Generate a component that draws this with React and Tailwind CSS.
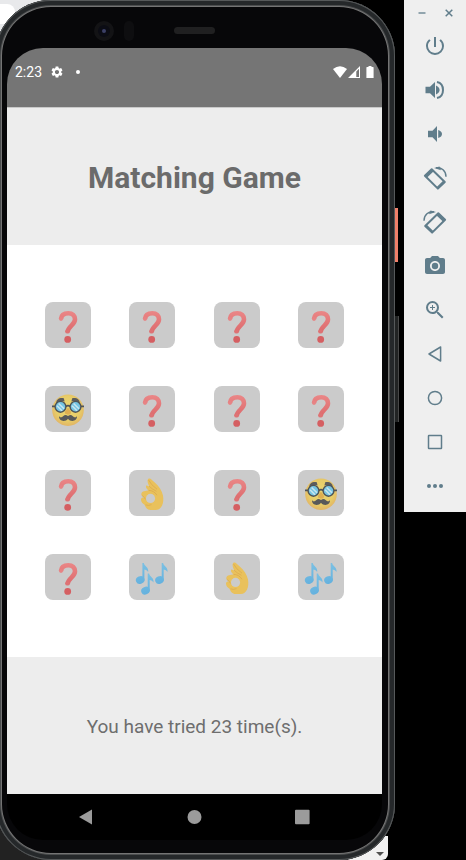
import { MdSettings, MdPowerSettingsNew, MdCameraAlt, MdZoomIn } from "react-icons/md";

function Question() {
  return (
    <svg viewBox="0 0 46 46" className="size-full" aria-hidden="true">
      <defs>
        <linearGradient id="red" x1="0" y1="8" x2="0" y2="41" gradientUnits="userSpaceOnUse">
          <stop offset="0" stopColor="#eb8888" />
          <stop offset="1" stopColor="#d55c60" />
        </linearGradient>
      </defs>
      <path d="M16 17C16.3 12.8 19.5 11.2 23.3 11.2C27.6 11.2 30 13.7 30 17.3C30 23.2 22.8 24 22.5 30.4" fill="none" stroke="url(#red)" strokeWidth="4.6" />
      <circle cx="16" cy="16.8" r="2.1" fill="#e78384" />
      <circle cx="22.5" cy="29.4" r="2.2" fill="#de7274" />
      <circle cx="22.7" cy="37.4" r="3.4" fill="#d55f62" />
    </svg>
  );
}

function Disguise() {
  return (
    <svg viewBox="0 0 46 46" className="size-full" aria-hidden="true">
      <defs>
        <radialGradient id="face" cx=".5" cy=".45" r=".55">
          <stop offset="0" stopColor="#ecd773" />
          <stop offset=".7" stopColor="#e7cc68" />
          <stop offset="1" stopColor="#e2b565" />
        </radialGradient>
      </defs>
      <circle cx="23" cy="24.2" r="15.8" fill="url(#face)" />
      <path d="M11.3 17.5C11 13.5 14 11.6 18.8 12.2L19.6 15.4C16.5 14.7 14.5 15.6 11.3 17.5ZM34.7 17.5C35 13.5 32 11.6 27.2 12.2L26.4 15.4C29.5 14.7 31.5 15.6 34.7 17.5Z" fill="#5c5c5d" />
      <path d="M23 21.5C21.8 23.7 19.2 25.3 20.2 27.6C21.1 29.2 24.9 29.2 25.8 27.6C26.8 25.3 24.2 23.7 23 21.5Z" fill="#deaf52" />
      <path d="M7 20.4H10.2M20.8 20.6Q23 18.8 25.2 20.6M35.8 20.4H39" stroke="#505457" strokeWidth="1.7" fill="none" />
      <circle cx="15.5" cy="20.8" r="5.4" fill="#75c4e3" stroke="#505457" strokeWidth="1.4" />
      <circle cx="30.5" cy="20.8" r="5.4" fill="#75c4e3" stroke="#505457" strokeWidth="1.4" />
      <path d="M12 19.8L17 24.8M13.6 17.5L19 22.8M27 19.8L32 24.8M28.6 17.5L34 22.8" stroke="#c8e5ef" strokeWidth="1.6" />
      <path d="M23 30C19.5 27.6 18.5 30.4 16.5 31.3C15.6 31.6 14.8 31.1 14 30.3C13.8 35.5 20.5 36.3 23 32.7C25.5 36.3 32.2 35.5 32 30.3C31.2 31.1 30.4 31.6 29.5 31.3C27.5 30.4 26.5 27.6 23 30Z" fill="#58595a" />
    </svg>
  );
}

function OkHand() {
  return (
    <svg viewBox="0 0 46 46" className="size-full" aria-hidden="true">
      <path
        d="M19.2 9C21 7.5 23 10 25.5 12.3C30 16.4 33 20.6 34 25.5C35.3 32.5 32.8 40 26.8 40H21.5C18.3 40 16.8 37.5 15.5 34.7C13.8 33.8 11.8 32 12 29.3C12.3 27.2 14.6 27.3 16 28C14 26.6 11.9 26 12.4 23.6C13 21.4 16.5 20.7 19.8 20.6C17.8 19.2 16.4 17.2 17.1 15.8C17.8 14.8 19.3 16.2 20.3 16.5C19.2 14 17.7 10.5 19.2 9Z"
        fill="#e9c15c"
      />
      <circle cx="21.5" cy="28.4" r="4.6" fill="#cbcbcb" />
      <path d="M20 16.2Q23 19 27.4 21.3M19.5 20.4Q25 20.4 28 25.3M19.6 10Q22 15 28 19.2M12.8 25.4Q15.4 26.8 16.5 29.4M16.5 34.8Q19 36 22.5 34.7" fill="none" stroke="#d9a64f" strokeWidth=".7" />
    </svg>
  );
}

function Notes() {
  return (
    <svg viewBox="0 0 46 46" className="size-full" aria-hidden="true">
      <defs>
        <linearGradient id="blue" x1="0" y1="8" x2="0" y2="41" gradientUnits="userSpaceOnUse">
          <stop offset="0" stopColor="#7cc1e3" />
          <stop offset="1" stopColor="#58a9dc" />
        </linearGradient>
        <g id="note">
          <ellipse cx="11.2" cy="26" rx="4.4" ry="3.8" transform="rotate(-24 11.2 26)" />
          <path d="M13.4 9H14.8C15.5 12.6 19.9 12.8 19.2 18C17.8 15.5 16.2 15.6 15.4 15.4V26.5H13.4Z" />
        </g>
      </defs>
      <g fill="url(#blue)">
        <use href="#note" />
        <use href="#note" x="19.3" />
        <use href="#note" x="5.3" y="10.6" />
      </g>
    </svg>
  );
}

const faces = {
  question: { label: "Hidden card", Icon: Question },
  disguise: { label: "Disguised face", Icon: Disguise },
  ok: { label: "OK hand", Icon: OkHand },
  notes: { label: "Musical notes", Icon: Notes },
};

const cards = [
  "question", "question", "question", "question",
  "disguise", "question", "question", "question",
  "question", "ok", "question", "disguise",
  "question", "notes", "ok", "notes",
];

function Speaker({ loud }) {
  return (
    <svg viewBox="0 0 24 24" className="size-6" fill="currentColor" aria-hidden="true">
      {loud ? (
        <>
          <path d="M2.5 8.7H7L12 4V20L7 15.3H2.5ZM13 7.5Q16.6 9.2 16.6 12T13 16.5Z" />
          <path d="M14 4C17.8 4.8 20 8 20 12S17.8 19.2 14 20" fill="none" stroke="currentColor" strokeWidth="2" />
        </>
      ) : (
        <path d="M5 8.7H9.5L14 4V20L9.5 15.3H5ZM15.2 7.9Q19 9.2 19 12T15.2 16.1Z" />
      )}
    </svg>
  );
}

function RotateLeft() {
  return (
    <svg viewBox="0 0 24 24" className="size-6" fill="none" stroke="currentColor" aria-hidden="true">
      <path d="M8.7 3.2L21.8 16L14.9 22.6L1.9 9.8Z" strokeWidth="2" strokeLinejoin="round" />
      <path d="M1.9 9.8L8.7 3.2L10.7 5.2L3.9 11.8ZM21.8 16L14.9 22.6L13.5 21.2L20.4 14.6Z" fill="currentColor" stroke="none" />
      <path d="M13 1.8C18.5 1 23 5 23 10.8" strokeWidth="1.4" />
      <path d="M11 2L16.5 .4L18 4.2Z" fill="currentColor" stroke="none" />
    </svg>
  );
}

function RotateRight() {
  return (
    <svg viewBox="0 0 24 24" className="size-6" fill="none" stroke="currentColor" aria-hidden="true">
      <path d="M15.3 3.2L2.2 16L9.1 22.6L22.1 9.8Z" strokeWidth="2" strokeLinejoin="round" />
      <path d="M22.1 9.8L15.3 3.2L13.3 5.2L20.1 11.8ZM2.2 16L9.1 22.6L10.5 21.2L3.6 14.6Z" fill="currentColor" stroke="none" />
      <path d="M11 1.8C5.5 1 1 5 1 10.8" strokeWidth="1.4" />
      <path d="M13 2L7.5 .4L6 4.2Z" fill="currentColor" stroke="none" />
    </svg>
  );
}

function Outline({ children }) {
  return (
    <svg viewBox="0 0 24 24" className="size-6" fill="none" stroke="currentColor" strokeWidth="1.5" strokeLinejoin="round" aria-hidden="true">
      {children}
    </svg>
  );
}

const tools = [
  { label: "Power", icon: <MdPowerSettingsNew className="size-6" /> },
  { label: "Volume up", icon: <Speaker loud /> },
  { label: "Volume down", icon: <Speaker /> },
  { label: "Rotate left", icon: <RotateLeft /> },
  { label: "Rotate right", icon: <RotateRight /> },
  { label: "Take screenshot", icon: <MdCameraAlt className="size-6" /> },
  { label: "Zoom", icon: <MdZoomIn className="size-6" /> },
  { label: "Back", icon: <Outline><path d="M6 12L17.6 5V19Z" /></Outline> },
  { label: "Home", icon: <Outline><circle cx="12" cy="12" r="6.6" /></Outline> },
  { label: "Overview", icon: <Outline><rect x="5.5" y="5.5" width="13" height="13" rx=".5" /></Outline> },
  {
    label: "More",
    icon: (
      <svg viewBox="0 0 24 24" className="size-6" fill="currentColor" aria-hidden="true">
        <circle cx="6" cy="12" r="2" /><circle cx="12" cy="12" r="2" /><circle cx="18" cy="12" r="2" />
      </svg>
    ),
  },
];

function StatusBar() {
  return (
    <header className="flex h-[59px] items-start justify-between bg-[#757575] px-2 pt-4 text-white">
      <div className="flex h-4 items-center">
        <span className="text-sm leading-4">2:23</span>
        <MdSettings className="ml-2 size-3.5" aria-hidden="true" />
        <span className="ml-3 size-1 rounded-full bg-white" />
      </div>
      <div className="flex h-4 items-center">
        <svg viewBox="0 0 14 12" className="h-3 w-3.5" fill="currentColor" aria-hidden="true">
          <path d="M0 3Q7-2.4 14 3L7 12Z" />
        </svg>
        <svg viewBox="0 0 12 12" className="ml-px size-3" fill="currentColor" aria-hidden="true">
          <path d="M0 12L12 0V12ZM8.3 5.5V11H11V2.8Z" fillRule="evenodd" />
        </svg>
        <svg viewBox="0 0 8 12" className="ml-1.5 h-3 w-2" fill="currentColor" aria-hidden="true">
          <path d="M2.5 0H5.5V1H7Q7.6 1 7.6 1.6V12H.4V1.6Q.4 1 1 1H2.5Z" />
        </svg>
      </div>
    </header>
  );
}

function Phone() {
  return (
    <div className="relative -ml-[5px] min-w-0 flex-1">
      <div className="absolute top-0 left-0 h-10 w-16 bg-[#e8e9eb]" />
      <div className="absolute top-1 left-0 h-5 w-5 rounded-tr-lg bg-white" />
      <div className="absolute bottom-0 left-0 h-14 w-16 bg-[#222222]" />
      <div className="absolute right-[7px] bottom-0 flex h-6 w-10 items-end justify-end rounded-br-md bg-[#f1f1f1] pr-1 pb-1">
        <svg viewBox="0 0 8 4" className="h-1 w-2" aria-hidden="true"><path d="M0 0H8L4 4Z" fill="#505050" /></svg>
      </div>
      <div className="absolute top-[208px] -right-[3px] h-[54px] w-[3px] bg-[#f0806a]" />
      <div className="absolute top-[316px] -right-1 h-[106px] w-1 border-r border-[#484848] bg-[#222424]" />

      <div className="relative rounded-t-[56px] rounded-b-[56px] bg-[#070709] pt-12 pr-[13px] pb-5 pl-3 shadow-[inset_0_0_0_1px_#56595a,inset_0_0_0_5px_#25282a,inset_0_0_0_6px_#4c4e4f,inset_0_0_0_7px_#747474]">
        <div className="absolute top-[21px] left-[99px] flex size-5 items-center justify-center rounded-full bg-[#131315]">
          <span className="flex size-3 items-center justify-center rounded-full bg-[#0b0c14]">
            <span className="size-1 rounded-full bg-[#3c4066]" />
          </span>
        </div>
        <div className="absolute top-[21px] left-[129px] h-5 w-2.5 rounded-full bg-[#0e0e10]" />
        <div className="absolute top-[27px] left-[179px] h-[7px] w-[41px] rounded-full bg-[#202021]" />

        <main className="overflow-hidden rounded-[36px]">
          <StatusBar />
          <section className="flex h-[138px] items-center justify-center border-t border-[#c9c9c9] bg-[#ededed]">
            <h1 className="pt-0.5 text-[30px] leading-9 font-bold text-[#6b6b6b]">Matching Game</h1>
          </section>
          <section className="grid grid-cols-4 bg-white px-[19px] py-[38px]">
            {cards.map((name, i) => {
              const { label, Icon } = faces[name];
              return (
                <div key={i} className="flex h-[84px] items-center justify-center">
                  <button type="button" aria-label={label} className="size-[46px] rounded-lg bg-[#cbcbcb]">
                    <Icon />
                  </button>
                </div>
              );
            })}
          </section>
          <section className="flex h-[137px] items-center justify-center bg-[#ededed]">
            <p className="pt-0.5 text-[19px] leading-6 text-[#6e6e6e]">You have tried 23 time(s).</p>
          </section>
          <nav className="flex h-[46px] items-center justify-center gap-[84px] bg-black text-[#9b9b9b]">
            <button type="button" aria-label="Back" className="size-6">
              <svg viewBox="0 0 24 24" className="size-6" fill="currentColor"><path d="M4 12L17 4.5V19.5Z" /></svg>
            </button>
            <button type="button" aria-label="Home" className="size-6">
              <svg viewBox="0 0 24 24" className="size-6" fill="currentColor"><circle cx="11.5" cy="12" r="7" /></svg>
            </button>
            <button type="button" aria-label="Recent apps" className="size-6">
              <svg viewBox="0 0 24 24" className="size-6" fill="currentColor"><rect x="4" y="4.7" width="14.6" height="14.6" rx="1" /></svg>
            </button>
          </nav>
        </main>
      </div>
    </div>
  );
}

function Toolbar() {
  return (
    <aside className="flex w-[62px] shrink-0 flex-col bg-[#efefef] pb-1 text-[#607d8b]">
      <div className="flex h-6 items-center justify-center gap-[15px] pt-0.5">
        <button type="button" aria-label="Minimize" className="size-3">
          <svg viewBox="0 0 12 12" className="size-3" stroke="currentColor" strokeWidth="1.3"><path d="M2.5 6H9.5" /></svg>
        </button>
        <button type="button" aria-label="Close" className="size-3">
          <svg viewBox="0 0 12 12" className="size-3" stroke="currentColor" strokeWidth="1.5"><path d="M2.7 2.7L9.3 9.3M9.3 2.7L2.7 9.3" /></svg>
        </button>
      </div>
      {tools.map((tool) => (
        <button key={tool.label} type="button" aria-label={tool.label} className="flex h-11 items-center justify-center">
          {tool.icon}
        </button>
      ))}
    </aside>
  );
}

export default function App() {
  return (
    <div className="flex min-h-screen items-start gap-[9px] overflow-hidden bg-black font-[Roboto,sans-serif]">
      <Phone />
      <Toolbar />
    </div>
  );
}
